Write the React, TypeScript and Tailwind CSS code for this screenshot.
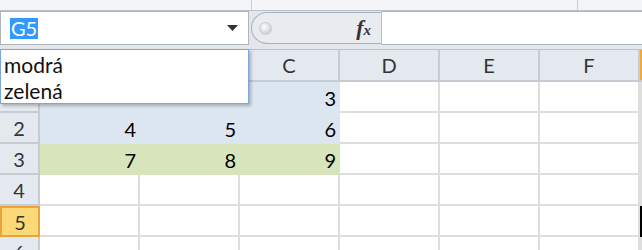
const cols = ['A', 'B', 'C', 'D', 'E', 'F'];

// row 1 values A1/B1 and the row label sit under the open name-box list
const rows: { n: number; label: string; vals: string[]; fill: string }[] = [
  { n: 1, label: '', vals: ['', '', '3'], fill: 'bg-[#dce6f1]' },
  { n: 2, label: '2', vals: ['4', '5', '6'], fill: 'bg-[#dce6f1]' },
  { n: 3, label: '3', vals: ['7', '8', '9'], fill: 'bg-[#d8e4bc]' },
  { n: 4, label: '4', vals: [], fill: '' },
  { n: 5, label: '5', vals: [], fill: '' },
  { n: 6, label: '6', vals: [], fill: '' },
];

export default function App() {
  return (
    <div className="relative w-[642px] h-[250px] overflow-hidden bg-[#e3e7ec] font-['Lato','Liberation_Sans',sans-serif] text-[#222]">
      {/* ribbon remnant */}
      <div className="h-[11px] bg-[#f3f5f8] border-b border-[#b9c0c8] flex">
        <div className="w-[252px] border-r border-[#c9ced5]" />
        <div className="w-[326px] border-r border-[#c9ced5]" />
      </div>

      {/* formula bar */}
      <div className="h-[34px] flex bg-[#e3e7ec]">
        <div className="w-[249px] bg-white border border-[#aeb5bd] flex items-center pl-[9px] pr-[10px]">
          <span className="bg-[#3399ff] text-white text-[20px] leading-[21px] px-[1px]">G5</span>
          <div className="flex-1" />
          <svg width="11" height="6" viewBox="0 0 11 6">
            <path d="M0 0 L11 0 L5.5 6 Z" fill="#333" />
          </svg>
        </div>
        <div className="w-[133px] flex items-center pl-[2px] border-r border-[#b9c0c8]">
          <div className="flex-1 h-[32px] rounded-l-[16px] border border-r-0 border-[#aab1b9] bg-[#e8ebef] flex items-center pl-[7px]">
            <div className="w-[13px] h-[13px] rounded-full bg-[radial-gradient(circle_at_40%_35%,#ffffff,#b9bfc7)] border border-[#c8cdd3]" />
            <div className="flex-1" />
            <span className="mr-[10px] font-['Liberation_Serif',serif] italic font-bold text-[22px] leading-none text-[#333]">
              f<span className="text-[15px]">x</span>
            </span>
          </div>
        </div>
        <div className="flex-1 bg-white border-y border-[#aeb5bd]" />
      </div>

      <div className="h-[5px] border-b border-[#b9c0c8]" />

      {/* grid */}
      <div className="bg-white">
        <div className="flex h-[32px] bg-[#e4e9ef] border-b-2 border-[#c6ccd3]">
          <div className="w-[40px] border-r-2 border-[#c6ccd3]" />
          {cols.map((c) => (
            <div
              key={c}
              className="w-[100px] border-r-2 border-[#c6ccd3] flex items-center justify-center text-[20px] text-[#333]"
            >
              {c}
            </div>
          ))}
          <div className="w-[2px] bg-[#f2a93b]" />
        </div>

        {rows.map((r) => (
          <div key={r.n} className="flex h-[31px]">
            <div
              className={`w-[40px] flex items-center justify-center text-[20px] text-[#333] ${
                r.n === 5
                  ? 'bg-[#fbd977] border-2 border-[#eaa53a]'
                  : 'bg-[#e4e9ef] border-r-2 border-b-2 border-[#c6ccd3]'
              }`}
            >
              {r.label}
            </div>
            {cols.map((c, i) => {
              const filled = i < 3 && r.fill;
              return (
                <div
                  key={c}
                  className={`w-[100px] flex items-center justify-end pr-[4px] text-[20px] text-black ${
                    filled ? r.fill : 'border-r-2 border-b-2 border-[#dedede]'
                  }`}
                >
                  {r.vals[i]}
                </div>
              );
            })}
            <div className={`w-[2px] ${r.n === 5 ? 'bg-black' : 'bg-[#dedede]'}`} />
          </div>
        ))}
      </div>

      {/* name box dropdown */}
      <div className="absolute left-0 top-[49px] w-[249px] h-[55px] bg-white border border-[#7ea6d6] shadow-[2px_2px_3px_rgba(0,0,0,0.25)] text-[21px] text-[#111]">
        <div className="h-[26px] leading-[26px] pl-[3px] mt-[2px]">modrá</div>
        <div className="h-[26px] leading-[26px] pl-[3px]">zelená</div>
      </div>
    </div>
  );
}
